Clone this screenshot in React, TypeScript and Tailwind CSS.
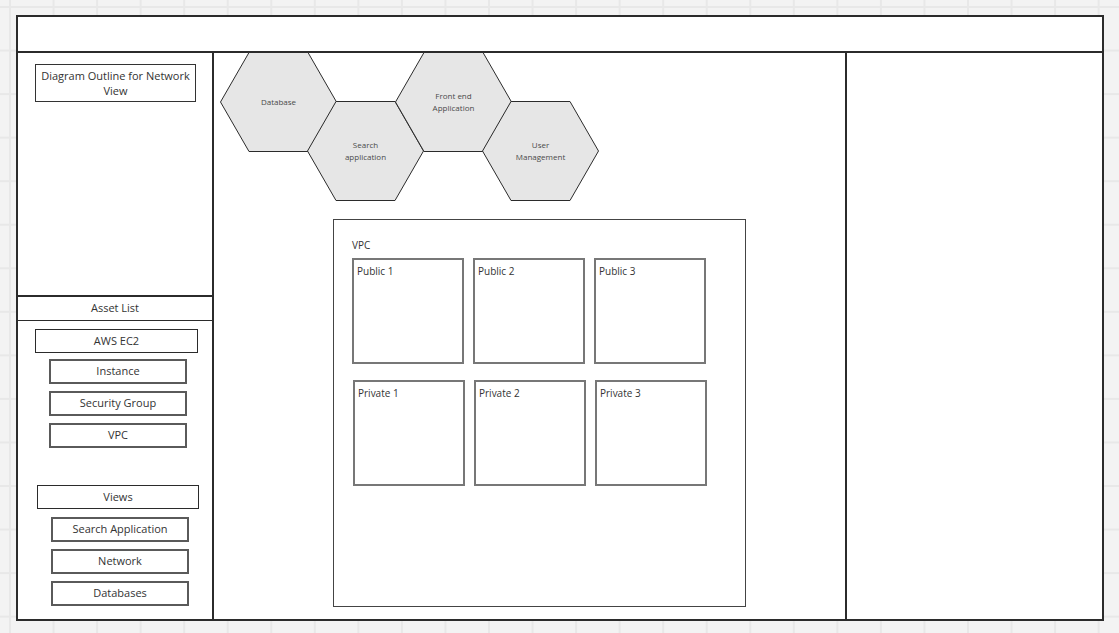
import React from "react";

const font = { fontFamily: '"Open Sans", "Noto Sans", sans-serif' };

type Hex = { label: string[]; left: string; top: string };

const hexes: Hex[] = [
  { label: ["Database"], left: "left-[6px]", top: "top-[-1px]" },
  { label: ["Search", "application"], left: "left-[93px]", top: "top-[48px]" },
  { label: ["Front end", "Application"], left: "left-[181px]", top: "top-[-1px]" },
  { label: ["User", "Management"], left: "left-[268px]", top: "top-[48px]" },
];

function HexNode({ hex }: { hex: Hex }) {
  return (
    <div className={`absolute ${hex.left} ${hex.top} w-[117px] h-[100px]`}>
      <svg className="absolute inset-0" width="117" height="100" viewBox="0 0 117 100">
        <polygon
          points="0.5,50 29,0.5 88,0.5 116.5,50 88,99.5 29,99.5"
          fill="#e6e6e6"
          stroke="#2b2b2b"
          strokeWidth="1"
        />
      </svg>
      <div className="absolute inset-0 flex flex-col items-center justify-center text-[8px] leading-[12px] text-[#4a4a4a]">
        {hex.label.map((l) => (
          <span key={l}>{l}</span>
        ))}
      </div>
    </div>
  );
}

function ItemBox({ children, main }: { children: React.ReactNode; main?: boolean }) {
  return (
    <div
      className={
        main
          ? "h-[24px] border border-[#2b2b2b] flex items-center justify-center text-[11px] text-[#333]"
          : "h-[25px] border-2 border-[#5a5a5a] flex items-center justify-center text-[11px] text-[#333]"
      }
    >
      {children}
    </div>
  );
}

function Subnet({ name }: { name: string }) {
  return (
    <div className="w-[112px] h-[106px] border-2 border-[#777] pl-[3px] pt-[4px] text-[10px] leading-[15px] text-[#333]">
      {name}
    </div>
  );
}

export default function App() {
  return (
    <div
      style={font}
      className="w-[1119px] h-[633px] overflow-hidden bg-[#f3f3f3] bg-[linear-gradient(to_right,#e8e8e8_2px,transparent_2px),linear-gradient(to_bottom,#e8e8e8_2px,transparent_2px)] bg-[size:43.55px_43.55px] bg-[position:9px_6px] pt-[15px] pl-[16px]"
    >
      <div className="w-[1088px] h-[606px] bg-white border-2 border-[#2b2b2b] flex flex-col">
        {/* header */}
        <div className="h-[36px] shrink-0 border-b-2 border-[#2b2b2b]" />

        <div className="flex flex-1 min-h-0">
          {/* left sidebar */}
          <div className="w-[196px] shrink-0 border-r-2 border-[#2b2b2b] flex flex-col">
            <div className="h-[244px] shrink-0 border-b-2 border-[#2b2b2b] pt-[11px] pl-[17px]">
              <div className="w-[161px] h-[38px] border border-[#333] flex flex-col items-center justify-center text-[11px] leading-[15px] text-[#333] text-center">
                <span>Diagram Outline for Network</span>
                <span>View</span>
              </div>
            </div>
            <div className="h-[24px] shrink-0 border-b border-[#2b2b2b] flex items-center justify-center text-[11px] text-[#333]">
              Asset List
            </div>
            <div className="flex flex-col pt-[8px]">
              <div className="ml-[17px] w-[163px]">
                <ItemBox main>AWS EC2</ItemBox>
              </div>
              <div className="ml-[31px] w-[138px] mt-[6px] flex flex-col gap-[7px]">
                <ItemBox>Instance</ItemBox>
                <ItemBox>Security Group</ItemBox>
                <ItemBox>VPC</ItemBox>
              </div>
              <div className="ml-[19px] w-[162px] mt-[37px]">
                <ItemBox main>Views</ItemBox>
              </div>
              <div className="ml-[33px] w-[138px] mt-[8px] flex flex-col gap-[7px]">
                <ItemBox>Search Application</ItemBox>
                <ItemBox>Network</ItemBox>
                <ItemBox>Databases</ItemBox>
              </div>
            </div>
          </div>

          {/* center canvas */}
          <div className="w-[633px] shrink-0 border-r-2 border-[#2b2b2b] flex flex-col">
            <div className="relative h-[166px] shrink-0">
              {hexes.map((h) => (
                <HexNode key={h.label.join(" ")} hex={h} />
              ))}
            </div>
            <div className="ml-[119px] w-[413px] h-[388px] border border-[#444] pt-[18px] pl-[18px]">
              <div className="text-[10px] leading-[14px] text-[#333]">VPC</div>
              <div className="mt-[6px] flex gap-[9px]">
                <Subnet name="Public 1" />
                <Subnet name="Public 2" />
                <Subnet name="Public 3" />
              </div>
              <div className="mt-[16px] ml-[1px] flex gap-[9px]">
                <Subnet name="Private 1" />
                <Subnet name="Private 2" />
                <Subnet name="Private 3" />
              </div>
            </div>
          </div>

          {/* right panel */}
          <div className="flex-1" />
        </div>
      </div>
    </div>
  );
}
